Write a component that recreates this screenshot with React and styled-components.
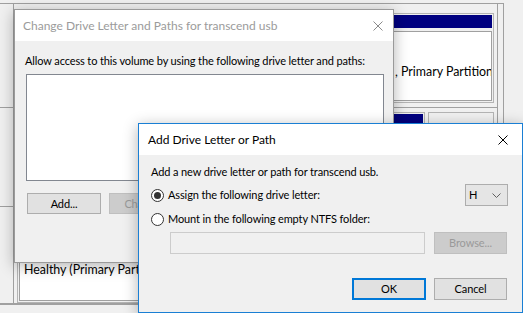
import React from "react";
import styled, { createGlobalStyle } from "styled-components";

const Global = createGlobalStyle`
  html, body { margin: 0; padding: 0; background: #f0f0f0; overflow: hidden; }
  body { font-family: Lato, "Noto Sans", sans-serif; font-size: 12px; color: #000; }
  * { box-sizing: border-box; }
`;

const Desktop = styled.div`
  position: relative;
  width: 523px;
  height: 313px;
  overflow: hidden;
  background: #f0f0f0;
`;

/* ---------- background Disk Management window ---------- */
const MainWindow = styled.div`
  position: absolute;
  inset: 0;
  padding-top: 3px;
`;

const Pane = styled.div`
  width: 504px;
  border-top: 1px solid #a0a0a0;
  border-right: 1px solid #a0a0a0;
  border-bottom: 1px solid #a0a0a0;
  padding-right: 5px;
  display: flex;
  flex-direction: column;
`;

const DiskRow = styled.div`
  display: grid;
  grid-template-columns: 14px 1fr;
  height: ${(p) => p.$h}px;
  border-bottom: 1px solid #a0a0a0;
  border-right: 1px solid #a0a0a0;
`;

const LabelCell = styled.div`
  border-right: 1px solid #a0a0a0;
  background: #f0f0f0;
`;

const PartArea = styled.div`
  display: flex;
  gap: 3px;
  padding: ${(p) => p.$pad};
  min-width: 0;
`;

const Partition = styled.div`
  display: flex;
  flex-direction: column;
  border: 1px solid #b4b4b4;
  padding: 1px;
  width: ${(p) => (p.$w ? `${p.$w}px` : "auto")};
  flex: ${(p) => (p.$w ? "none" : "1")};
  min-width: 0;
`;

const PartHeader = styled.div`
  height: 13px;
  background: ${(p) => p.$color || "#000080"};
`;

const PartBody = styled.div`
  flex: 1;
  margin-top: 3px;
  background: #fff;
  border: 1px solid #a0a0a0;
  padding: ${(p) => p.$top || 5}px 0 0 ${(p) => p.$indent || 4}px;
  overflow: hidden;
  white-space: nowrap;
  line-height: 14px;
  font-size: 12.4px;
`;

/* ---------- dialogs ---------- */
const Dialog = styled.div`
  position: absolute;
  left: ${(p) => p.$x}px;
  top: ${(p) => p.$y}px;
  width: ${(p) => p.$w}px;
  height: ${(p) => p.$h}px;
  border: 1px solid ${(p) => (p.$active ? "#1a7fd4" : "#9a9a9a")};
  background: #f0f0f0;
  box-shadow: 0 3px 14px rgba(0, 0, 0, 0.3);
  display: flex;
  flex-direction: column;
`;

const TitleBar = styled.div`
  height: 31px;
  flex: none;
  background: #fff;
  display: flex;
  align-items: center;
  justify-content: space-between;
  padding: 0 ${(p) => p.$closeRight}px 0 ${(p) => p.$left}px;
  color: ${(p) => (p.$active ? "#000" : "#9b9b9b")};
  font-size: 12px;
  white-space: nowrap;
`;

const CloseGlyph = ({ color }) => (
  <svg width="10" height="10" viewBox="0 0 10 10" style={{ display: "block" }}>
    <path d="M0.5 0.5 L9.5 9.5 M9.5 0.5 L0.5 9.5" stroke={color} strokeWidth="1" fill="none" />
  </svg>
);

const Body = styled.div`
  flex: 1;
  display: flex;
  flex-direction: column;
  padding: ${(p) => p.$pad};
  line-height: 16px;
  font-size: 11px;
  letter-spacing: -0.12px;
`;

const Text = styled.div`
  white-space: nowrap;
  margin-top: ${(p) => p.$mt || 0}px;
`;

const ListBox = styled.div`
  margin: 5px 0 0 1px;
  width: 358px;
  height: 107px;
  background: #fff;
  border: 1px solid #828790;
`;

const ButtonRow = styled.div`
  display: flex;
  gap: ${(p) => p.$gap || 8}px;
  justify-content: ${(p) => p.$justify || "flex-start"};
  margin-top: ${(p) => p.$mt || 0}px;
  margin-left: ${(p) => p.$ml || 0}px;
`;

const Button = styled.div`
  width: ${(p) => p.$w || 74}px;
  height: ${(p) => p.$h || 22}px;
  flex: none;
  display: flex;
  align-items: center;
  justify-content: center;
  background: ${(p) => (p.$disabled ? "#cccccc" : "#e1e1e1")};
  border: 1px solid ${(p) => (p.$default ? "#0078d7" : p.$disabled ? "#bfbfbf" : "#adadad")};
  box-shadow: ${(p) => (p.$default ? "inset 0 0 0 1px #0078d7" : "none")};
  color: ${(p) => (p.$disabled ? "#9a9a9a" : "#000")};
  white-space: nowrap;
  overflow: hidden;
`;

const RadioRow = styled.div`
  display: flex;
  align-items: center;
  justify-content: space-between;
  height: ${(p) => p.$h}px;
  margin-top: ${(p) => p.$mt}px;
`;

const RadioLabel = styled.label`
  display: flex;
  align-items: center;
  gap: 4px;
  white-space: nowrap;
`;

const RadioCircle = styled.span`
  width: 13px;
  height: 13px;
  flex: none;
  border-radius: 50%;
  border: 1px solid #333;
  background: #fff;
  display: flex;
  align-items: center;
  justify-content: center;
  &::after {
    content: "";
    width: 7px;
    height: 7px;
    border-radius: 50%;
    background: #333;
    display: ${(p) => (p.$checked ? "block" : "none")};
  }
`;

const Select = styled.div`
  width: 43px;
  height: 22px;
  margin-right: -1px;
  background: #e5e5e5;
  border: 1px solid #adadad;
  display: flex;
  align-items: center;
  justify-content: space-between;
  padding: 0 6px 0 3px;
`;

const PathRow = styled.div`
  display: flex;
  gap: 9px;
  margin: 5px 0 0 19px;
`;

const PathInput = styled.div`
  width: 256px;
  height: 22px;
  background: #f0f0f0;
  border: 1px solid #cccccc;
`;

const Chevron = () => (
  <svg width="9" height="5" viewBox="0 0 9 5" style={{ display: "block" }}>
    <path d="M0.5 0.5 L4.5 4.5 L8.5 0.5" stroke="#606060" strokeWidth="1" fill="none" />
  </svg>
);

export default function App() {
  return (
    <Desktop>
      <Global />
      <MainWindow>
        <Pane>
          <DiskRow $h={104}>
            <LabelCell />
            <PartArea $pad="9px 3px 4px 2px">
              <Partition>
                <PartHeader />
                <PartBody $top={33} $indent={376}>
                  <div>, Primary Partition)</div>
                </PartBody>
              </Partition>
            </PartArea>
          </DiskRow>
          <DiskRow $h={99}>
            <LabelCell />
            <PartArea $pad="4px 3px 4px 2px">
              <Partition>
                <PartHeader />
                <PartBody />
              </Partition>
              <Partition $w={66}>
                <PartHeader $color="#f0f0f0" />
                <PartBody />
              </Partition>
            </PartArea>
          </DiskRow>
          <DiskRow $h={97}>
            <LabelCell />
            <PartArea $pad="4px 3px 0 3px">
              <Partition>
                <PartHeader />
                <PartBody $top={33}>
                  <div>Healthy (Primary Partition)</div>
                </PartBody>
              </Partition>
            </PartArea>
          </DiskRow>
        </Pane>
      </MainWindow>

      <Dialog $x={14} $y={9} $w={380} $h={254}>
        <TitleBar $left={8} $closeRight={10}>
          <span>Change Drive Letter and Paths for transcend usb</span>
          <CloseGlyph color="#8a8a8a" />
        </TitleBar>
        <Body $pad="12px 10px 0 10px">
          <Text>Allow access to this volume by using the following drive letter and paths:</Text>
          <ListBox />
          <ButtonRow $mt={12} $ml={2}>
            <Button $w={74} $h={21}>Add...</Button>
            <Button $w={74} $h={21} $disabled>Change...</Button>
          </ButtonRow>
        </Body>
      </Dialog>

      <Dialog $x={138} $y={123} $w={385} $h={190} $active>
        <TitleBar $left={9} $closeRight={14} $active>
          <span>Add Drive Letter or Path</span>
          <CloseGlyph color="#000" />
        </TitleBar>
        <Body $pad="9px 15px 0 12px">
          <Text>Add a new drive letter or path for transcend usb.</Text>
          <RadioRow $h={22} $mt={4}>
            <RadioLabel>
              <RadioCircle $checked />
              Assign the following drive letter:
            </RadioLabel>
            <Select>
              <span>H</span>
              <Chevron />
            </Select>
          </RadioRow>
          <RadioRow $h={16} $mt={5}>
            <RadioLabel>
              <RadioCircle />
              Mount in the following empty NTFS folder:
            </RadioLabel>
          </RadioRow>
          <PathRow>
            <PathInput />
            <Button $w={73} $disabled>Browse...</Button>
          </PathRow>
          <ButtonRow $mt={24} $justify="flex-end">
            <Button $w={74} $default>OK</Button>
            <Button $w={73}>Cancel</Button>
          </ButtonRow>
        </Body>
      </Dialog>
    </Desktop>
  );
}
